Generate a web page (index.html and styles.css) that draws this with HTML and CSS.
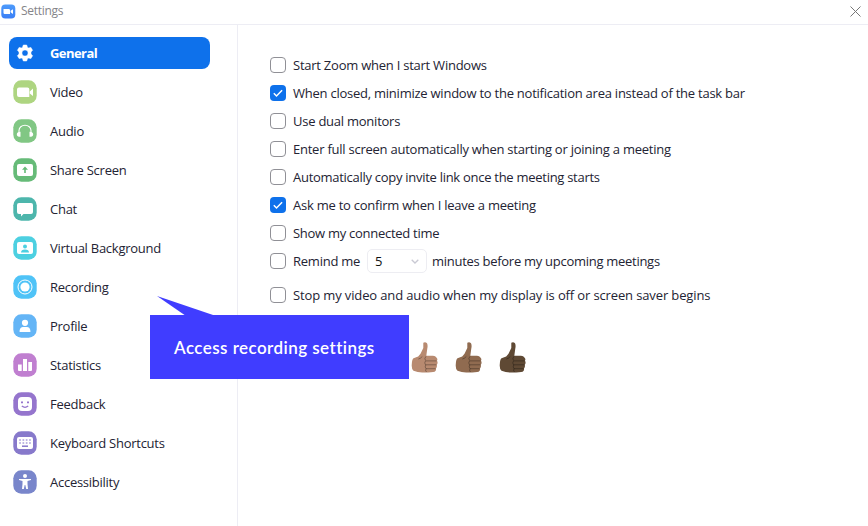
FILE: index.html
```html
<!DOCTYPE html>
<html lang="en">
<head>
<meta charset="utf-8">
<title>Settings</title>
<link rel="stylesheet" href="styles.css">
</head>
<body>
<svg class="defs" width="0" height="0" aria-hidden="true">
  <symbol id="thumb" viewBox="0 0 27 31">
    <path d="M12.300.8Q14.300-.5 16 1.300Q17 3 16.300 6.500L15.300 13.800H22Q24.500 14 25.400 15.400Q27 16.800 26 18.800Q27.300 21 25.800 22.800Q26.400 25 25 26.500Q25.400 28.800 23.600 29.800Q21 30.700 12 30.600Q7 30.800 2.500 28.800Q.3 27 .8 22Q1 17.500 2.500 16.300L7.200 14.600L9.500 11.800L12.300 6Z" fill="currentColor"/>
    <path d="M15 14.300Q13 16.500 14.500 18.500M14.700 18.900H25.500M14.500 18.900Q13 21 14.500 22.800H25.300M14.800 22.900Q13.500 25 15 26.700H24.500M15 26.700Q14 28.600 15.500 30M7.400 17Q9.600 16.500 11.300 14.500" fill="none" stroke="#000" stroke-opacity=".3" stroke-width="1"/>
  </symbol>
</svg>
<header class="titlebar">
  <svg class="logo" viewBox="0 0 15 15"><defs><linearGradient id="lg" x2="0" y2="1"><stop stop-color="#4d9bfb"/><stop offset="1" stop-color="#3b7ff6"/></linearGradient></defs><rect width="14" height="14" x=".3" y=".5" rx="4" fill="url(#lg)"/><path d="M2.500 5h5.300q1.200 0 1.200 1.200V10H3.700Q2.500 10 2.500 8.800zM9.600 6.700 12 5.200v4.700L9.600 8.300z" fill="#fff"/></svg>
  <span class="title">Settings</span>
  <svg class="close" viewBox="0 0 11 11"><path d="M.5.5l10 10M10.500.5l-10 10" stroke="#777" stroke-width="1" fill="none"/></svg>
</header>
<div class="window">
  <nav class="sidebar">
    <a class="item active"><svg viewBox="0 0 24 24"><path fill="#fff" fill-rule="evenodd" d="M10.300 4h3.400l.7 2.200 1.200.7 2.300-.5 1.700 2.900-1.600 1.700v2l1.600 1.700-1.700 2.900-2.300-.5-1.200.7-.7 2.200h-3.400l-.7-2.200-1.200-.7-2.300.5-1.700-2.900L6 13v-2L4.400 9.300l1.700-2.900 2.300.5 1.200-.7zM12 8.900a3.100 3.100 0 1 0 0 6.200 3.100 3.100 0 0 0 0-6.200z" stroke="#fff" stroke-width=".5" stroke-linejoin="round"/></svg><span>General</span></a>
    <a class="item"><svg viewBox="0 0 24 24"><rect class="tile" fill="#aed581"/><path fill="#fff" d="M6 7.500h8.500q1.800 0 1.800 1.800V17H6q-2 0-2-2V9.500q0-2 2-2zM16.800 11.500l3.200-3v7.500l-3.200-2.500z"/></svg><span>Video</span></a>
    <a class="item"><svg viewBox="0 0 24 24"><rect class="tile" fill="#81c784"/><path fill="none" stroke="#fff" stroke-width="1.100" d="M6 14v-2.500a6 5.300 0 0 1 12 0V14"/><path fill="#fff" d="M7.500 12.800v5q-3.700 0-3.700-2.400 0-2.200 3.700-2.600zM16.500 12.800v5q3.700 0 3.700-2.400 0-2.200-3.700-2.600z"/></svg><span>Audio</span></a>
    <a class="item"><svg viewBox="0 0 24 24"><rect class="tile" fill="#66bb78"/><rect x="4" y="6" width="16" height="12" rx="2" fill="#fff"/><path fill="#66bb78" d="M12 8.500l3 3.200h-2.200V15h-1.600v-3.300H9z"/></svg><span>Share Screen</span></a>
    <a class="item"><svg viewBox="0 0 24 24"><rect class="tile" fill="#4db6ac"/><path fill="#fff" d="M6 6h12q2 0 2 2v7q0 2-2 2h-7.500L8 19.600V17H6q-2 0-2-2V8q0-2 2-2z"/></svg><span>Chat</span></a>
    <a class="item"><svg viewBox="0 0 24 24"><rect class="tile" fill="#4dd0e1"/><rect x="4" y="6" width="16" height="12" rx="2" fill="#fff"/><circle cx="12" cy="10.600" r="2" fill="#4dd0e1"/><path d="M8 16.500q0-3 4-3t4 3z" fill="#4dd0e1"/></svg><span>Virtual Background</span></a>
    <a class="item"><svg viewBox="0 0 24 24"><rect class="tile" fill="#4fc3f7"/><circle cx="12" cy="12" r="7" fill="none" stroke="#fff" stroke-width="1"/><circle cx="12" cy="12" r="4.600" fill="#fff"/></svg><span>Recording</span></a>
    <a class="item"><svg viewBox="0 0 24 24"><rect class="tile" fill="#64b5f6"/><circle cx="12" cy="8.800" r="3.100" fill="#fff"/><path d="M6.600 18v-1.200Q7 13 10 13h4q3 0 3.400 3.800V18z" fill="#fff"/></svg><span>Profile</span></a>
    <a class="item"><svg viewBox="0 0 24 24"><rect class="tile" fill="#c07fd0"/><path fill="#fff" d="M5 11.500h3.700V18H6q-1 0-1-1zM10 6h4v12h-4zM15.300 9h3.700v8q0 1-1 1h-2.700z"/></svg><span>Statistics</span></a>
    <a class="item"><svg viewBox="0 0 24 24"><rect class="tile" fill="#9575cd"/><rect x="5" y="5" width="14" height="14" rx="4" fill="#fff"/><path d="M8 9.500h2v1.800H8zM14 9.500h2v1.800h-2z" fill="#9575cd"/><path d="M8.800 14q3.200 2.600 6.400 0" fill="none" stroke="#9575cd" stroke-width="1.200"/></svg><span>Feedback</span></a>
    <a class="item"><svg viewBox="0 0 24 24"><rect class="tile" fill="#8779cb"/><rect x="4" y="6" width="16" height="12" rx="2" fill="#fff"/><path stroke="#a99fda" stroke-width="1.700" stroke-dasharray="1.700 1.600" d="M6.200 9h12M6.200 12h12"/><path stroke="#8779cb" stroke-width="1.500" d="M9 15.200h6"/></svg><span>Keyboard Shortcuts</span></a>
    <a class="item"><svg viewBox="0 0 24 24"><rect class="tile" fill="#7986cb"/><circle cx="12" cy="6" r="2" fill="#fff"/><path fill="#fff" d="M6 8.900l4.500.2h3l4.500-.2v1.200l-3.500.8v3l.5 5h-1.800L12.300 15h-.6l-.9 3.900H9l.5-5v-3L6 10.100z"/></svg><span>Accessibility</span></a>
  </nav>
  <main class="content">
    <label class="option"><i class="box"></i><span>Start Zoom when I start Windows</span></label>
    <label class="option"><i class="box on"><svg viewBox="0 0 16 16"><path d="M3.800 8.300l2.700 2.700 5.600-5.700"/></svg></i><span>When closed, minimize window to the notification area instead of the task bar</span></label>
    <label class="option"><i class="box"></i><span>Use dual monitors</span></label>
    <label class="option"><i class="box"></i><span>Enter full screen automatically when starting or joining a meeting</span></label>
    <label class="option"><i class="box"></i><span class="snug">Automatically copy invite link once the meeting starts</span></label>
    <label class="option"><i class="box on"><svg viewBox="0 0 16 16"><path d="M3.800 8.300l2.700 2.700 5.600-5.700"/></svg></i><span>Ask me to confirm when I leave a meeting</span></label>
    <label class="option"><i class="box"></i><span class="snug">Show my connected time</span></label>
    <div class="option"><i class="box"></i><span class="remind">Remind me</span><div class="select"><span>5</span><svg viewBox="0 0 8 5"><path d="M.7.7L4 4 7.300.7"/></svg></div><span class="snug">minutes before my upcoming meetings</span></div>
    <label class="option last"><i class="box"></i><span>Stop my video and audio when my display is off or screen saver begins</span></label>
    <div class="tones">
      <svg class="tone tan"><use href="#thumb"/></svg>
      <svg class="tone brown"><use href="#thumb"/></svg>
      <svg class="tone dark"><use href="#thumb"/></svg>
    </div>
  </main>
</div>
<aside class="callout"><svg class="tail" viewBox="0 0 66 20"><path d="M7 0 66 20H36z" fill="#403dff"/></svg><span>Access recording settings</span></aside>
</body>
</html>
```

FILE: styles.css
```css
* { box-sizing: border-box; }
body { margin: 0; width: 868px; height: 526px; overflow: hidden; background: #fff; color: #232333; font: 13px/20px "Open Sans", "Noto Sans", sans-serif; position: relative; }
.defs { position: absolute; }
.titlebar { height: 25px; border-bottom: 1px solid #ededf4; display: flex; align-items: center; padding: 0 7px 2px 1px; font-size: 12px; color: #858589; }
.logo { width: 15px; height: 15px; }
.title { margin-left: 5px; letter-spacing: -.3px; }
.close { width: 11px; height: 11px; margin-left: auto; }
.window { display: flex; height: 501px; }
.sidebar { width: 238px; border-right: 1px solid #ededf4; padding: 12px 27px 0 9px; display: flex; flex-direction: column; gap: 7px; letter-spacing: -.26px; }
.item { height: 32px; display: flex; align-items: center; padding-left: 4px; border-radius: 8px; white-space: nowrap; }
.item svg { width: 24px; height: 24px; margin-right: 13px; }
.tile { x: .3px; y: .3px; width: 23.400px; height: 23.400px; rx: 8px; }
.active { background: #0e71eb; color: #fff; font-weight: 700; letter-spacing: -.55px; }
.content { padding: 26px 0 0 32px; flex: 1; letter-spacing: -.24px; }
.option { height: 28px; display: flex; align-items: center; white-space: nowrap; }
.snug { letter-spacing: -.28px; }
.box { width: 16px; height: 16px; border: 1px solid #909096; border-radius: 4px; margin-right: 7px; display: flex; flex: none; }
.on { background: #0e71eb; border: 0; }
.on svg { width: 16px; height: 16px; fill: none; stroke: #fff; stroke-width: 1.500; }
.remind { width: 74px; }
.select { width: 60px; height: 24px; border: 1px solid #ededf2; border-radius: 5px; display: flex; align-items: center; justify-content: space-between; padding: 0 7px; margin-right: 5px; color: #111; }
.select svg { width: 8px; height: 5px; fill: none; stroke: #c9c9d3; stroke-width: 1.300; }
.last { margin-top: 6px; letter-spacing: -.13px; }
.tones { display: flex; gap: 17px; margin: 33px 0 0 141px; }
.tone { width: 27px; height: 31px; }
.tan { color: #b88a70; }
.brown { color: #906b50; }
.dark { color: #5f4934; }
.callout { position: absolute; left: 150px; top: 315px; width: 259px; height: 64px; background: #403dff; color: #fff; display: flex; align-items: center; padding: 1px 0 0 24px; font: 600 17px/24px Lato, sans-serif; letter-spacing: .44px; white-space: nowrap; }
.tail { position: absolute; left: 0; top: -19px; width: 66px; height: 20px; }
```
